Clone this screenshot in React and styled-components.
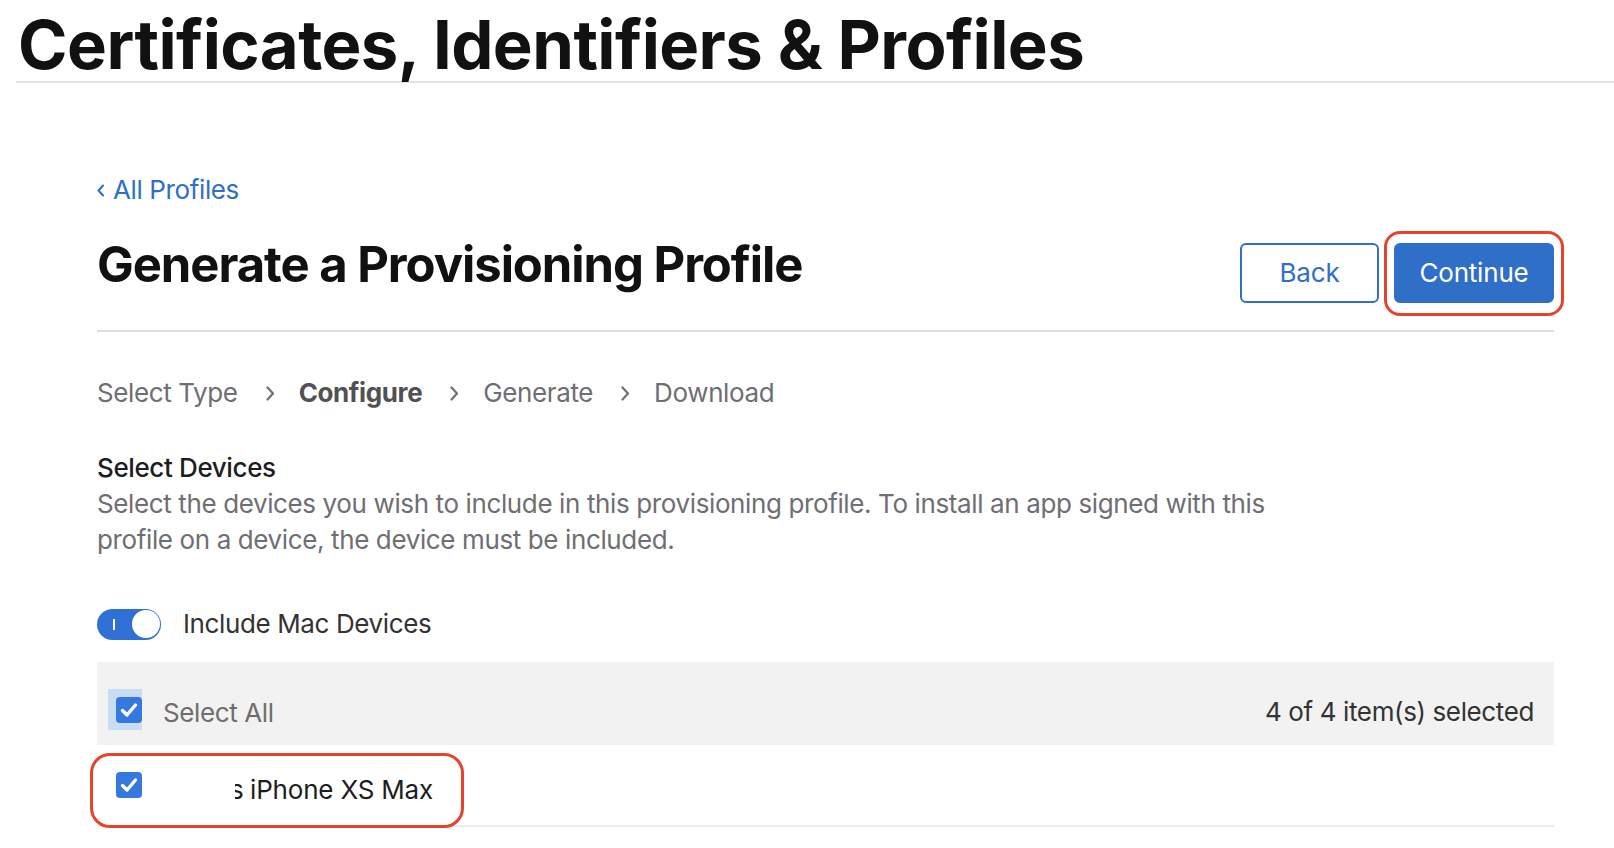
import React from 'react'
import styled, { createGlobalStyle } from 'styled-components'

const GlobalStyle = createGlobalStyle`
  body {
    margin: 0;
    background: #fff;
    font-family: Inter, "Noto Sans", "Liberation Sans", sans-serif;
    color: #1d1d1f;
    letter-spacing: -0.38px;
  }
`

const Page = styled.div`
  width: 1614px;
  min-height: 848px;
`

const Header = styled.header`
  margin-left: 16px;
  padding: 11px 0 3px 2px;
  border-bottom: 2px solid #e3e3e3;
`

const Title = styled.h1`
  margin: 0;
  font-size: 67px;
  line-height: 67px;
  font-weight: 700;
  letter-spacing: -0.55px;
  color: #111;
`

const Main = styled.main`
  margin-left: 97px;
  width: 1457px;
`

const BackLink = styled.a`
  display: inline-flex;
  align-items: center;
  gap: 9px;
  margin-top: 91px;
  font-size: 26px;
  line-height: 32px;
  color: #2f6fc7;
  text-decoration: none;
`

const HeadRow = styled.div`
  display: flex;
  align-items: baseline;
  justify-content: space-between;
  margin-top: 29px;
  padding-bottom: 27px;
  border-bottom: 2px solid #dedede;
`

const Heading = styled.h2`
  margin: 0;
  font-size: 49px;
  line-height: 60px;
  font-weight: 700;
  letter-spacing: -1.05px;
  color: #111;
`

const Buttons = styled.div`
  display: flex;
  gap: 15px;
`

const Button = styled.button`
  position: relative;
  box-sizing: border-box;
  width: ${p => p.$width}px;
  height: 60px;
  border-radius: 6px;
  border: 2px solid #2f6fc7;
  background: ${p => (p.$primary ? '#2f6fc7' : '#fff')};
  color: ${p => (p.$primary ? '#fff' : '#2f6fc7')};
  font-family: inherit;
  font-size: 26px;
  line-height: 32px;
  letter-spacing: -0.2px;
`

const Highlight = styled.span`
  position: absolute;
  top: ${p => p.$top}px;
  right: ${p => p.$right}px;
  bottom: ${p => p.$bottom}px;
  left: ${p => p.$left}px;
  border: 3px solid #e5432c;
  border-radius: ${p => p.$radius}px;
  pointer-events: none;
`

const Steps = styled.ol`
  display: flex;
  align-items: center;
  margin: 45px 0 0;
  padding: 0;
  list-style: none;
  font-size: 26px;
  line-height: 32px;
  color: #6e6e73;
`

const Step = styled.li`
  display: flex;
  align-items: center;
  font-weight: ${p => (p.$current ? 700 : 400)};
  color: ${p => (p.$current ? '#515154' : '#6e6e73')};
`

const Chevron = styled.svg`
  margin: 0 24px 0 28px;
`

const Section = styled.section`
  margin-top: 41px;
`

const SectionTitle = styled.h3`
  margin: 0;
  font-size: 26px;
  line-height: 36px;
  font-weight: 500;
  color: #1d1d1f;
`

const Description = styled.p`
  margin: 0;
  font-size: 26px;
  line-height: 36px;
  color: #6e6e73;
`

const ToggleRow = styled.label`
  display: flex;
  align-items: center;
  gap: 22px;
  margin-top: 50px;
  font-size: 26px;
  line-height: 32px;
  color: #333;
`

const Toggle = styled.span`
  position: relative;
  display: flex;
  align-items: center;
  justify-content: flex-end;
  box-sizing: border-box;
  width: 64px;
  height: 31px;
  padding: 0 1.5px;
  border-radius: 16px;
  background: #2f6fd6;
`

const ToggleMark = styled.span`
  position: absolute;
  left: 16px;
  top: 10px;
  width: 2px;
  height: 11px;
  background: #fff;
`

const Knob = styled.span`
  width: 28px;
  height: 28px;
  border-radius: 50%;
  background: #fff;
`

const Table = styled.div`
  margin-top: 22px;
`

const SelectBar = styled.div`
  display: flex;
  align-items: center;
  justify-content: space-between;
  box-sizing: border-box;
  height: 83px;
  padding: 12px 20px 0 11px;
  background: #f2f2f2;
`

const Cell = styled.div`
  display: flex;
  align-items: center;
`

const Focus = styled.span`
  display: flex;
  padding: 8px 0 7px 8px;
  background: #c8dcf4;
`

const Box = styled.span`
  display: flex;
  align-items: center;
  justify-content: center;
  width: 26px;
  height: 26px;
  border-radius: 4px;
  background: #3478e0;
`

const Label = styled.span`
  padding-top: ${p => p.$shift}px;
  margin-left: ${p => p.$gap}px;
  font-size: 26px;
  line-height: 32px;
  color: ${p => p.$color};
`

const Count = styled.span`
  padding-top: 5px;
  font-size: 26px;
  line-height: 32px;
  color: #333;
`

const DeviceRow = styled.div`
  position: relative;
  display: flex;
  align-items: center;
  box-sizing: border-box;
  height: 82px;
  padding-left: 19px;
  border-bottom: 2px solid #ebebeb;
  letter-spacing: -0.2px;
`

const Clipped = styled.span`
  display: inline-block;
  width: 8px;
  overflow: hidden;
  vertical-align: top;

  span {
    display: inline-block;
    margin-left: -5px;
  }
`

const Check = () => (
  <svg width="18" height="16" viewBox="0 0 18 16">
    <path d="M2.5 8.5 L7 13 L15.5 3" fill="none" stroke="#fff" strokeWidth="3.4" strokeLinecap="round" strokeLinejoin="round" />
  </svg>
)

const steps = ['Select Type', 'Configure', 'Generate', 'Download']

export default function App() {
  return (
    <Page>
      <GlobalStyle />
      <Header>
        <Title>Certificates, Identifiers &amp; Profiles</Title>
      </Header>
      <Main>
        <BackLink href="#">
          <svg width="7" height="13" viewBox="0 0 7 13">
            <path d="M6 1.5 L1.5 6.5 L6 11.5" fill="none" stroke="#2f6fc7" strokeWidth="2" strokeLinecap="round" strokeLinejoin="round" />
          </svg>
          All Profiles
        </BackLink>
        <HeadRow>
          <Heading>Generate a Provisioning Profile</Heading>
          <Buttons>
            <Button $width={139}>Back</Button>
            <Button $width={160} $primary>
              Continue
              <Highlight $top={-14} $right={-12} $bottom={-15} $left={-12} $radius={16} />
            </Button>
          </Buttons>
        </HeadRow>
        <Steps>
          {steps.map((s, i) => (
            <Step key={s} $current={i === 1}>
              {i > 0 && (
                <Chevron width="9" height="15" viewBox="0 0 9 15">
                  <path d="M1.5 1.5 L7 7.5 L1.5 13.5" fill="none" stroke="#6e6e73" strokeWidth="2.2" strokeLinecap="round" strokeLinejoin="round" />
                </Chevron>
              )}
              {s}
            </Step>
          ))}
        </Steps>
        <Section>
          <SectionTitle>Select Devices</SectionTitle>
          <Description>
            Select the devices you wish to include in this provisioning profile. To install an app signed with this
            <br />
            profile on a device, the device must be included.
          </Description>
        </Section>
        <ToggleRow>
          <Toggle>
            <ToggleMark />
            <Knob />
          </Toggle>
          Include Mac Devices
        </ToggleRow>
        <Table>
          <SelectBar>
            <Cell>
              <Focus>
                <Box><Check /></Box>
              </Focus>
              <Label $gap={21} $shift={6} $color="#6e6e6e">Select All</Label>
            </Cell>
            <Count>4 of 4 item(s) selected</Count>
          </SelectBar>
          <DeviceRow>
            <Box><Check /></Box>
            <Label $gap={93} $shift={9} $color="#1d1d1f">
              <Clipped><span>s</span></Clipped> iPhone XS Max
            </Label>
            <Highlight $top={8} $bottom={-3} $left={-7} $right={1090} $radius={20} />
          </DeviceRow>
        </Table>
      </Main>
    </Page>
  )
}
